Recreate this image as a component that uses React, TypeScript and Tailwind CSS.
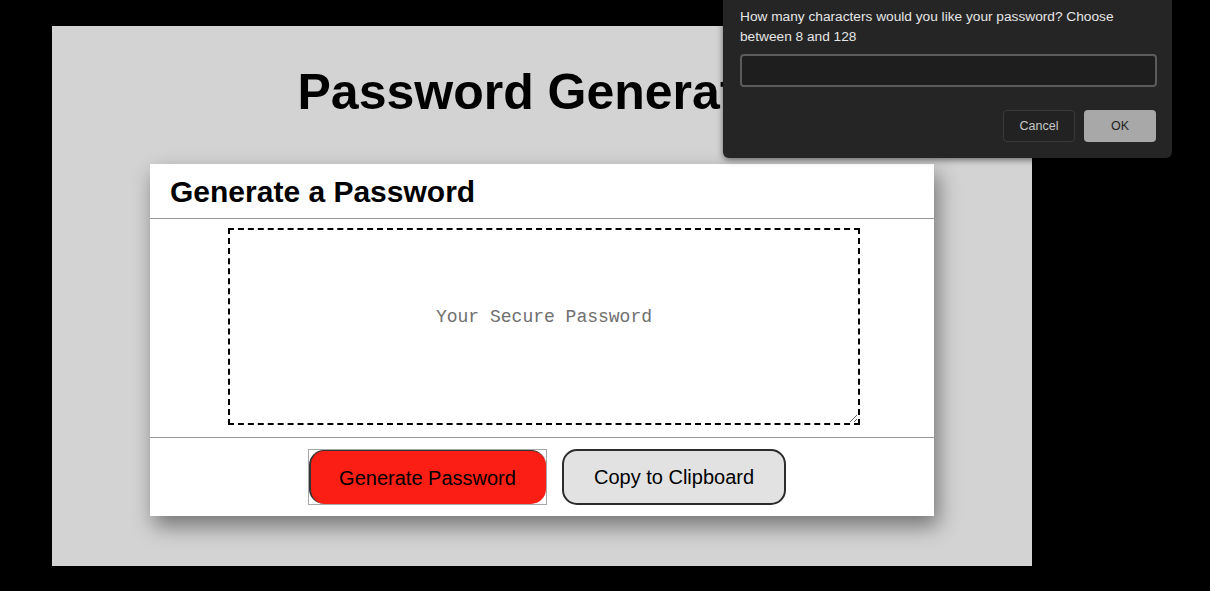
import React from "react";

export default function App() {
  return (
    <div className="relative min-h-[591px] w-[1210px] bg-black overflow-hidden font-['Liberation_Sans',Arial,sans-serif]">
      <div className="ml-[52px] pt-[26px]">
        <div className="w-[980px] h-[540px] bg-[#d3d3d3] flex flex-col items-center">
          <h1 className="mt-[36px] text-[50px] leading-[60px] font-bold text-black">Password Generator</h1>

          <div className="mt-[42px] w-[784px] h-[352px] bg-white flex flex-col shadow-[4px_10px_20px_rgba(0,0,0,0.45)]">
            <div className="h-[55px] border-b border-[#999] pl-[20px] flex items-center">
              <h2 className="text-[30px] font-bold text-black leading-none pt-[2px]">Generate a Password</h2>
            </div>

            <div className="flex justify-center pt-[9px] pb-[12px] pl-[4px]">
              <textarea
                readOnly
                placeholder="Your Secure Password"
                className="w-[632px] h-[197px] border-2 border-dashed border-black resize-y outline-none text-center text-[18px] font-['Liberation_Mono',monospace] pt-[74px] placeholder-[#6f6f6f]"
              />
            </div>

            <div className="flex-1 border-t border-[#999] flex items-center justify-center gap-[15px] pl-[10px]">
              <div className="border border-[#a8a8a8] p-0">
                <button className="w-[237px] h-[54px] bg-[#fa1e14] rounded-[15px] border-l-2 border-t border-[#333] text-[20px] text-black pr-[2px]">
                  Generate Password
                </button>
              </div>
              <button className="w-[224px] h-[56px] bg-[#e2e2e2] rounded-[15px] border-2 border-[#2c2c2c] text-[20px] text-black">
                Copy to Clipboard
              </button>
            </div>
          </div>
        </div>
      </div>

      <div className="absolute left-[723px] top-0 w-[449px] h-[158px] bg-[#252525] rounded-b-[6px] shadow-[0_2px_6px_rgba(0,0,0,0.5)] pl-[17px] pr-[16px] pt-[7px]">
        <p className="max-w-[390px] text-[13.7px] leading-[20px] text-[#e6e6e6] font-['Liberation_Sans',Arial,sans-serif]">
          How many characters would you like your password? Choose between 8 and 128
        </p>
        <div className="mt-[7px] h-[33px] w-[417px] bg-[#1e1e1e] border-2 border-[#5b5b5b] rounded-[4px]" />
        <div className="mt-[23px] flex justify-end gap-[9px]">
          <button className="w-[72px] h-[32px] rounded-[4px] border border-[#3a3a3a] bg-[#222] text-[12.5px] font-medium text-[#c8c8c8]">
            Cancel
          </button>
          <button className="w-[72px] h-[32px] rounded-[4px] bg-[#a8a8a8] text-[12.5px] font-medium text-[#1e1e1e]">
            OK
          </button>
        </div>
      </div>
    </div>
  );
}
